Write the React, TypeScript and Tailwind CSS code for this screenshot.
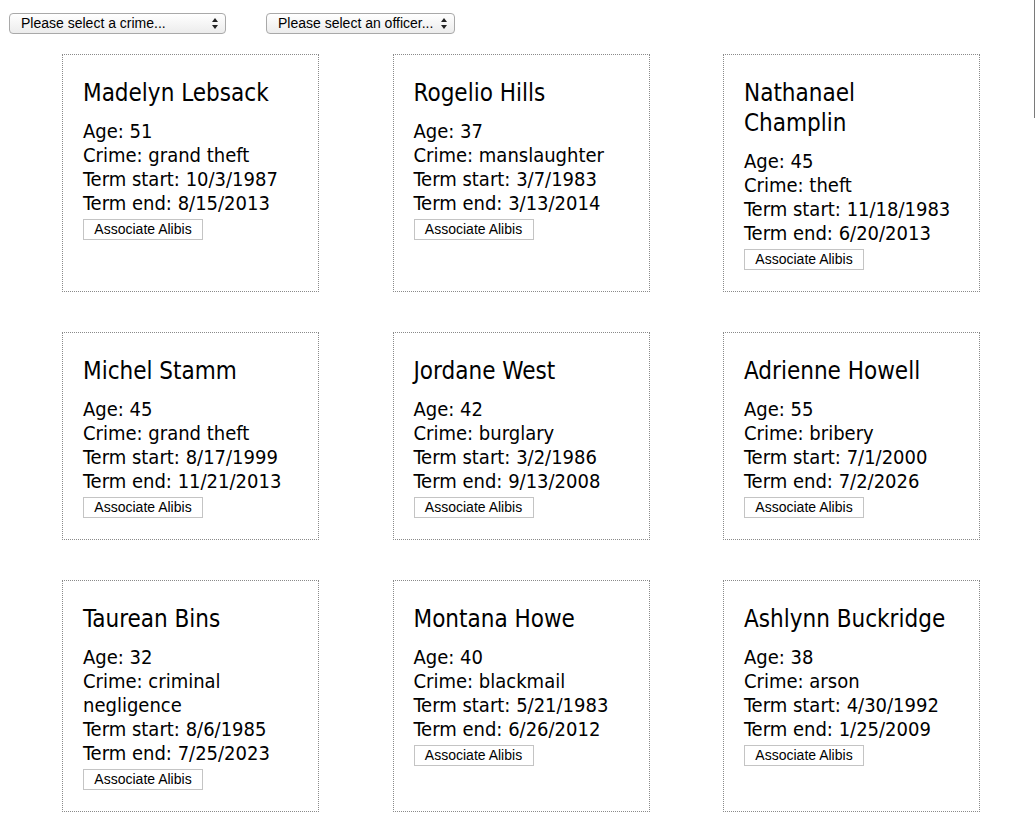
import React from "react"

type Inmate = {
  name: string
  age: number
  crime: string
  start: string
  end: string
}

const inmates: Inmate[] = [
  { name: "Madelyn Lebsack", age: 51, crime: "grand theft", start: "10/3/1987", end: "8/15/2013" },
  { name: "Rogelio Hills", age: 37, crime: "manslaughter", start: "3/7/1983", end: "3/13/2014" },
  { name: "Nathanael Champlin", age: 45, crime: "theft", start: "11/18/1983", end: "6/20/2013" },
  { name: "Michel Stamm", age: 45, crime: "grand theft", start: "8/17/1999", end: "11/21/2013" },
  { name: "Jordane West", age: 42, crime: "burglary", start: "3/2/1986", end: "9/13/2008" },
  { name: "Adrienne Howell", age: 55, crime: "bribery", start: "7/1/2000", end: "7/2/2026" },
  { name: "Taurean Bins", age: 32, crime: "criminal negligence", start: "8/6/1985", end: "7/25/2023" },
  { name: "Montana Howe", age: 40, crime: "blackmail", start: "5/21/1983", end: "6/26/2012" },
  { name: "Ashlynn Buckridge", age: 38, crime: "arson", start: "4/30/1992", end: "1/25/2009" },
]

function SelectBox({ label, width }: { label: string; width: string }) {
  return (
    <div className={`relative h-[21px] ${width}`}>
      <select
        defaultValue=""
        className="block h-full w-full appearance-none rounded-[4px] border border-[#a9a9a9] bg-gradient-to-b from-white to-[#ececec] pl-[11px] pr-5 text-[14px] leading-[19px] text-black outline-none font-['Liberation_Sans',Arial,sans-serif]"
      >
        <option value="">{label}</option>
      </select>
      <svg
        className="pointer-events-none absolute right-[8px] top-[5px]"
        width="6"
        height="11"
        viewBox="0 0 6 11"
      >
        <path d="M3 0 L6 4 L0 4 Z" fill="#222" />
        <path d="M0 7 L6 7 L3 11 Z" fill="#222" />
      </svg>
    </div>
  )
}

function InmateCard({ inmate }: { inmate: Inmate }) {
  return (
    <div className="border border-dotted border-[#8a8a8a] px-5 pt-[23px] pb-[21px] text-black">
      <h2 className="mb-[11px] text-[24px] leading-[30px]">{inmate.name}</h2>
      <div className="text-[20px] leading-[24px]">
        <div>Age: {inmate.age}</div>
        <div>Crime: {inmate.crime}</div>
        <div>Term start: {inmate.start}</div>
        <div>Term end: {inmate.end}</div>
      </div>
      <button className="mt-1 block h-[21px] w-[120px] border border-[#c4c4c4] bg-white text-[14px] leading-[19px] text-black font-['Liberation_Sans',Arial,sans-serif]">
        Associate Alibis
      </button>
    </div>
  )
}

export default function App() {
  return (
    <div className="min-h-screen bg-white font-['DejaVu_Sans_Condensed','DejaVu_Sans',sans-serif] [font-stretch:condensed]">
      {/* filters */}
      <div className="flex gap-10 pl-[9px] pt-[13px]">
        <SelectBox label="Please select a crime..." width="w-[217px]" />
        <SelectBox label="Please select an officer..." width="w-[189px]" />
      </div>

      {/* inmate cards */}
      <div className="mt-5 grid grid-cols-[repeat(3,257px)] gap-x-[73.5px] gap-y-10 pl-[62px] pb-10">
        {inmates.map((inmate) => (
          <InmateCard key={inmate.name} inmate={inmate} />
        ))}
      </div>

      <div className="fixed right-0 top-0 h-[118px] w-px bg-[#7a7a7a]"></div>
    </div>
  )
}
